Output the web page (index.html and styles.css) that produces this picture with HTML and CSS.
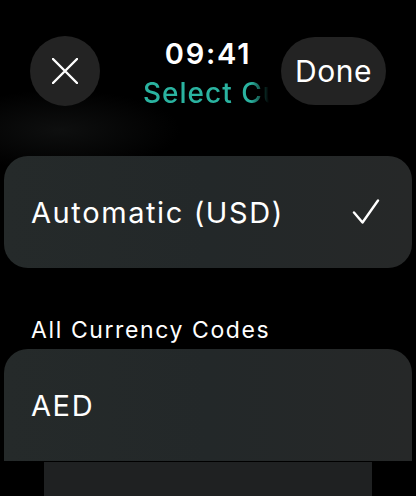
FILE: index.html
```html
<!DOCTYPE html>
<html>
<head>
<meta charset="utf-8">
<link rel="stylesheet" href="styles.css">
</head>
<body>
<div class="screen">
  <header class="header">
    <div class="close">
      <svg width="26" height="26" viewBox="0 0 26 26"><path d="M1 1 L25 25 M25 1 L1 25" stroke="#fff" stroke-width="2.4" stroke-linecap="round" fill="none"/></svg>
    </div>
    <div class="title">
      <div class="time">09:41</div>
      <div class="subtitle">Select Currency</div>
    </div>
    <div class="done">Done</div>
  </header>
  <div class="list">
    <div class="card card-auto">
      <span class="label">Automatic (USD)</span>
      <svg class="check" width="28" height="26" viewBox="0 0 28 26"><path d="M2 13.5 L10.5 23.5 L26 1.5" stroke="#fff" stroke-width="2.4" stroke-linecap="round" stroke-linejoin="round" fill="none"/></svg>
    </div>
    <div class="section">All Currency Codes</div>
    <div class="card card-aed">
      <span class="label">AED</span>
    </div>
    <div class="card card-next"></div>
  </div>
</div>
</body>
</html>
```
FILE: styles.css
```css
html, body {
  margin: 0;
  padding: 0;
  background: #000;
}
.screen {
  width: 416px;
  height: 496px;
  overflow: hidden;
  background: radial-gradient(ellipse 120px 40px at 60px 130px, #0e0f0f, #000 100%), #000;
  font-family: "Inter", "Open Sans", sans-serif;
  color: #fff;
}
.header {
  display: flex;
  align-items: flex-start;
  padding: 36px 30px 0 30px;
  height: 70px;
}
.close {
  width: 70px;
  height: 70px;
  border-radius: 50%;
  background: #232323;
  display: flex;
  align-items: center;
  justify-content: center;
  flex: none;
}
.title {
  width: 130px;
  margin-left: 43px;
  display: flex;
  flex-direction: column;
  overflow: hidden;
}
.time {
  text-align: center;
  font-size: 29px;
  font-weight: 600;
  line-height: 36px;
  letter-spacing: 1.8px;
}
.subtitle {
  white-space: nowrap;
  color: #2ab3a0;
  font-size: 28px;
  font-weight: 500;
  line-height: 34px;
  margin-top: 4px;
  letter-spacing: 1px;
  -webkit-mask-image: linear-gradient(to right, #000 108px, transparent 126px);
  mask-image: linear-gradient(to right, #000 108px, transparent 126px);
}
.done {
  margin-left: auto;
  width: 105px;
  height: 68px;
  margin-top: 1px;
  border-radius: 34px;
  background: #232323;
  display: flex;
  align-items: center;
  justify-content: center;
  font-size: 30px;
  letter-spacing: 0.5px;
  flex: none;
}
.list {
  padding: 50px 4px 0 4px;
  display: flex;
  flex-direction: column;
}
.card {
  display: flex;
  align-items: center;
  justify-content: space-between;
  background: linear-gradient(90deg, #252a2a 0%, #232829 50%, #262828 100%);
  padding: 0 32px 0 27px;
  font-size: 29px;
  letter-spacing: 1.6px;
}
.card-auto {
  height: 112px;
  border-radius: 24px;
}
.section {
  font-size: 23px;
  padding-left: 27px;
  margin-top: 48px;
  line-height: 28px;
  letter-spacing: 1.6px;
}
.card-aed {
  margin-top: 5px;
  height: 112px;
  border-radius: 24px 24px 0 0;
}
.card-next {
  margin: 1px 40px 0 40px;
  height: 40px;
  border-radius: 0;
  background: #1f2122;
}
.check {
  display: block;
}
```
